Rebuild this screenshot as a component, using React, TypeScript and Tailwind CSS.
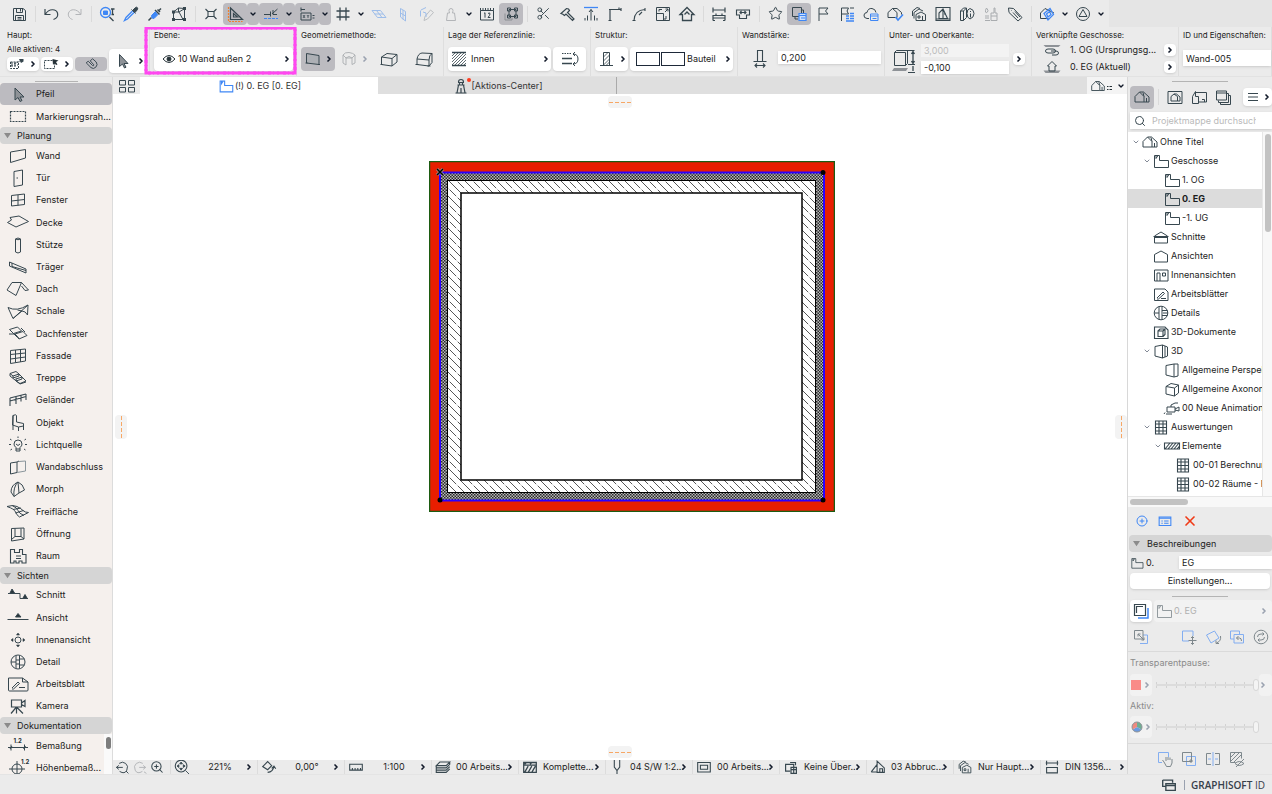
import type { ReactNode } from "react";
import {
  ChevronDown,
  ChevronRight,
  CirclePlus,
  Scissors,
  Search,
  Star,
  X,
  ZoomIn,
} from "lucide-react";

const BLUE = "#3f87f5";
const ORANGE = "#f08030";

// small icons, drawn on a 20 x 20 grid
const glyphs: Record<string, ReactNode> = {
  save: <path d="M4.500 4.500h9.500l2.500 2v10h-12zM7.500 4.500v4h6v-4M11.500 5v2.500M6.500 16.500v-5h8v5M8.500 13.500h4M8.500 15h4" />,
  undo: <path d="M4 5v5.500h5.500M4.500 10C8 4.500 15 4.500 16.500 9c.8 3-1 5.500-4 6.500" strokeWidth="1.200" />,
  redo: <path d="M16 5v5.500h-5.500M15.500 10C12 4.500 5 4.500 3.500 9c-.8 3 1 5.500 4 6.500" stroke="#b3b5b8" />,
  find: (
    <>
      <circle cx="8.500" cy="8.500" r="5" stroke={BLUE} strokeWidth="1.300" />
      <path d="M6.500 7h4v3.500h-4z" fill={BLUE} stroke={BLUE} />
      <path d="M12.500 13l4 4M14 5h3.500M15.500 5v6M14.500 10.500h2.500" strokeWidth="1.300" />
    </>
  ),
  dropper: (
    <>
      <path d="M12 6l2.500-2.500q1.500-.8 2 .3t-.2 2L14 8.500zM10.500 5.500l4 4" fill="#37474f" />
      <path d="M11.500 7L5 13.500l-1.500 3 3-1.500L13 8.500" stroke={BLUE} strokeWidth="1.300" />
    </>
  ),
  syringe: (
    <>
      <path d="M12.500 5.500l2.500 2.500M14 6.500l2-2M10 6l4.500 4.500M3.500 16.500l3-3" strokeWidth="1.500" />
      <path d="M10.500 7.500l-4 4 .5 2.500 2 .5 4-4" stroke={BLUE} fill={BLUE} />
    </>
  ),
  frameEdit: (
    <>
      <path d="M4.500 8l5-4 6 .5v11h-11zM9.500 4v4M5 8h5l4 7.500M10 8l5-3" />
      <path d="M3 6.500h3v3H3zM14 3h3v3h-3zM14 14h3v3h-3zM3 14h3v3H3z" fill="#37474f" stroke="none" />
    </>
  ),
  nodeX: <path d="M7 7.500h6v5H7zM7 7.500L4.500 5M13 7.500L15.500 5M7 12.500L4.500 15M13 12.500l2.500 2.500" strokeWidth="1.100" />,
  setSquare: (
    <>
      <path d="M5.500 4v11.500h12zM8.500 9.500v3.500h4z" strokeWidth="1.200" />
      <path d="M3.500 3v14.500h14" stroke={ORANGE} strokeWidth="1.200" strokeDasharray="2 1" />
    </>
  ),
  snap: (
    <>
      <path d="M3 10.500h6.500M9.500 7.500v5M11 10l5.500-5M12 6v4.500h4" />
      <path d="M3 14.500h14" stroke={BLUE} strokeDasharray="3 1" />
    </>
  ),
  coords: (
    <>
      <path d="M4 5.500h4M4 3.500v4M4 9h10v7H4zM15.500 11.500h2M15.500 14h2" />
      <path d="M6 11l2 3m0-3l-2 3M10 11l1 1.500 1-1.500M11 12.500V14" strokeWidth=".8" />
    </>
  ),
  hash: <path d="M7 3.500v13M13 3.500v13M3.500 7h13M3.500 13h13" strokeWidth="1.300" />,
  planeFlat: <path d="M3 6.500h8.500l5.500 7H8.500zM5.500 10h8.500M7.500 6.500l5.500 7" stroke="#9dbdea" />,
  planeTall: <path d="M7.500 4.500l5 3v9.500l-5-4zM10 6v9.500M7.500 9l5 3" stroke="#9dbdea" />,
  pencilPlane: (
    <>
      <path d="M4 6l5-2.500M3.500 6.500v6" stroke="#9dbdea" />
      <path d="M13.500 6l3 2.500-6 6.500-3.500 1.500 1-4z" stroke="#bcbfc2" />
      <path d="M6 8l3 1v4" stroke="#9dbdea" />
    </>
  ),
  weight: <path d="M8 6.500a2 2 0 1 1 4 0c0 1-.5 1.500-.5 2.500h2l1 7.500h-9l1-7.500h2c0-1-.5-1.500-.5-2.500z" stroke="#b3b5b8" />,
  ruler12: (
    <>
      <path d="M3.500 6.500v9.500h13V6.500M3.500 6.500V4M6 6V4M8.500 6V4M11 6V4M13.500 6V4M16.500 6.500V4M3.500 6.500h13" />
      <path d="M7 9.500l1-.8v5M11 9.500q2-1.500 2 .5 0 1-2 3.500h2.500" />
    </>
  ),
  boxNodes: (
    <>
      <path d="M4 9.500v6.500h7v-2.500" stroke="#8c9094" />
      <path d="M8 5.500h7v7H8zM6.500 4h3v3h-3zM13.500 4h3v3h-3zM6.500 11h3v3h-3zM13.500 11h3v3h-3z" />
    </>
  ),
  axe: <path d="M4 9.500l5.500-5q2.500 0 3 2l-2 2L17 15l-1.500 1.500-6.500-6.500-1.500 1.500q-1.500-1.500-3.500-2z" strokeWidth="1.200" />,
  raise: (
    <>
      <path d="M3 3.500h14" stroke={BLUE} strokeWidth="1.300" />
      <path d="M10 16.500v-11M8 8l2-2.500L12 8M6.500 16.500v-5M13.500 16.500v-5M4 16.500v-2.500M16 16.500v-2.500" />
    </>
  ),
  cornerL: <path d="M5 16.500v-11h11M3.500 16.500h3M16 4v3M14 3.500v2M4 5.500h2" strokeWidth="1.200" />,
  cornerArc: <path d="M5 16.500Q5.500 6 16 5.500M3.500 16.500h3M16 4v3M10 11l3-3" strokeWidth="1.100" />,
  resize: <path d="M3.500 3.500h13v13h-13zM3.500 9.500h7v7M12 8l3-3M12.500 5H15v2.500M13 12v3h-2M6 5.500h3M6 5.500v2" />,
  houseUp: <path d="M3 10.500l7-7 7 7h-2.500v6h-9v-6zM7.500 10.500L10 8l2.500 2.500" strokeWidth="1.300" />,
  dimH: <path d="M4 3.500v5M16 3.500v5M4 6h12M4 16.500v-5h12v5M4 14h12M7 9.500v2M13 9.500v2M4 16.500h2M14 16.500h2" strokeWidth="1.200" />,
  beam: <path d="M3.500 6h13v5h-3v3.500h-7V11h-3zM7 8.500h6M8.500 7L7 8.500 8.500 10M11.500 7L13 8.500 11.500 10" strokeWidth="1.100" />,
  layersBlue: (
    <>
      <path d="M3.500 3.500h9v9h-9zM12.500 6h2v3M6 12.500V15h3" />
      <path d="M10 9.500h7v7h-7zM10 11.500h7M12 14h4" stroke={BLUE} fill="#cfe0fa" strokeWidth="1.200" />
    </>
  ),
  flag: <path d="M6 17V4h9l-2.500 3 2.500 3H6" />,
  flagList: (
    <>
      <path d="M4.500 17V4h7l-1.500 3 1.500 3h-7M13 4h4" />
      <path d="M9 12h3M13 12h4M9 14.500h3M13 14.500h4M13 9.500h4M9 17h8" stroke={BLUE} strokeWidth="1.400" />
    </>
  ),
  cloudList: (
    <>
      <path d="M8 14.500H6Q2.500 14 3 11q.5-2.500 3-2.500Q7 4 11 4.500q3.500.5 4 4" />
      <path d="M9.500 10h7.500v6.500H9.500zM9.500 12h7.500M11.500 14.500h4" stroke={BLUE} />
    </>
  ),
  houseCheck: (
    <>
      <path d="M3 13.500V8.500l4.500-4 4.500 4v5zM7.500 4.500H12l4.500 4v2" />
      <path d="M10.500 13l2.500 3 5-5.500" stroke={BLUE} strokeWidth="1.600" />
    </>
  ),
  houses: <path d="M7 16.500v-6L12 8l4.500 2.500v6zM5 14.500V8.500L10 5l4 2M3.500 12V7L8 3.500l3 1M9 12h2v2H9zM13.500 12v4" />,
  houseFrame: <path d="M3 3.500h14v13H3zM3 15h14M6 14.500V9l4-4 4.500 9.500zM10 5v9.500M11 10h2" strokeWidth="1.100" />,
  info3d: <path d="M3.500 7l3-3h3v9.500l-3 3h-3zM6.500 7V16.500M3.500 7h3l3-3M13 4.500q4 1 4 5t-4 5.500q-3-1-3-5.500t3-5zM13.500 7v1M13.500 9.500v4" />,
  brush: <path d="M5.500 4Q4 6.500 4.500 8t2 0T5.500 4zM13 4v5h-3v3h6V9h-2V4zM10 12v4.500h6V12M4 12h4M4 14h4M4 16.500h5" stroke="#a9acaf" />,
  tag: <path d="M3.500 4l5 .5 8.500 9-4 3.500L4 8.500zM6 6.500h.5M8 8.500l5 5.500M10 7.500l5 5.500" />,
  cubeBlue: (
    <>
      <path d="M3.500 14.500V9L8 4.500 17 9M3.500 14.500h8" />
      <path d="M7 9.500l6-5 3.500 6-5.500 5.500zM9.500 10l3-2.500 1.500 3-3 2.500z" stroke={BLUE} strokeWidth="1.300" />
    </>
  ),
  triCircle: (
    <>
      <circle cx="10" cy="10" r="6.500" />
      <path d="M10 5.500l4 7H6z" />
    </>
  ),
  selNodes: (
    <>
      <path d="M3.500 8v6.500h8V8zM7 10l8-4M4 11h7M5 8v6M8 8v6" strokeDasharray="2 1" />
      <path d="M12 5h4.500v2.500L14 9z" fill="#37474f" stroke="none" />
    </>
  ),
  selBox: (
    <>
      <path d="M3.500 6.500h10v8h-10z" strokeDasharray="2 1" />
      <path d="M11.500 5l6 1.500-2.500 1.500 1.500 2.500-1.500.5-1.500-2L12 11z" fill="#263238" stroke="none" />
    </>
  ),
  magnet: <path d="M4 8.500L10 14.500Q13 17 16 14t.5-6.500L12 3.500M4 8.500l2.500-2 5.500 5.500q1.500.8 1.500-1L9 6M9 6l3-2.500" strokeWidth="1.200" />,
  arrow: <path d="M6.500 3.500v12l3-2.500 2 4 1.500-.8-2-3.700h4z" fill="#8e9297" stroke="#37474f" />,
  wallGeo: <path d="M3.500 4.500L16 6.500v9L3.500 14zM2.500 14h2M15 15.500h2" fill="#adb0b5" />,
  wallArc: (
    <g stroke="#b0b3b6">
      <path d="M4 6q2-3 6-2.500t6 2.500v8l-3 1.500V9H7v7l-3-2zM7 9q3-3 6 0M4 6l3 3M16 6l-3 3" />
    </g>
  ),
  wallBox: <path d="M2.500 8l10.500 1.500v7.500L2.500 15.500zM2.500 8l5.500-3.500 10 1v7.500L13 17M13 9.500l5-4M1.500 15.500h2" />,
  wallSlant: <path d="M3 15.500V10q1-5.500 5-6l10 .5v9L15 17 3 15.500M3 10l12 1v6M15 11q0-5 3-6.500M1.500 15.500h3M13.500 17h3" />,
  hatch: (
    <>
      <path d="M3 3.500h14M3 16.500h14" strokeWidth="1.300" />
      <path d="M3 7l3-3M3 10l6-6M3 13l9-9M3 16L15 4M6 16L17 5M9 16l8-8M12 16l5-5M15 16l2-2" strokeWidth=".8" />
    </>
  ),
  flipLine: (
    <>
      <path d="M2 4.500h10" strokeDasharray="1.500 1" />
      <path d="M2 9.500h10M2 14.500h10" strokeWidth="1.600" />
      <path d="M13 5q5 0 5 5t-5 5M15 3l-2 2 2 2M15 13l-2 2 2 2" />
    </>
  ),
  wallCut: (
    <>
      <path d="M7.500 3.500h6v13h-6zM4 16.500h13" />
      <path d="M7.500 8l4-4M7.500 12l6-6M7.500 16l6-6M10 16.500l3.500-3.500" strokeWidth=".8" />
    </>
  ),
  thickness: <path d="M7.500 12V1.500h5V12M3.500 12.500h13M5 16.500h10M7 14.500l-2 2 2 2M13 14.500l2 2-2 2" strokeWidth="1.100" />,
  linkTop: (
    <>
      <path d="M1.500 5h17l-2 2h-13z" fill="#8e9297" stroke="none" />
      <path d="M6 9h5q2.500 0 2.500 2T11 13H6q-2.500 0-2.500-2T6 9zM9 11h5q2.500 0 2.500 2T14 15h-4" />
    </>
  ),
  linkHome: (
    <>
      <path d="M1.500 13.500h17l-2 2.500h-13z" fill="#8e9297" stroke="none" />
      <path d="M5.500 9L10 4.500 14.500 9H13v5H7V9z" />
    </>
  ),
  grid4: <path d="M2.500 4.500h6v4.500h-6zM11.500 4.500h6v4.500h-6zM2.500 11.500h6v4.500h-6zM11.500 11.500h6v4.500h-6z" />,
  storey: <path d="M3.500 4.500h5v5h9v7h-14zM5 4.500v3l2-3" />,
  tower: <path d="M7 6.500h6M7.500 6q0-2.500 2.500-2.500T12.500 6M6.500 9h7M7.500 9l-1.500 8h8l-1.500-8zM8.500 6.500V9M11.500 6.500V9M10 12v5M4.500 17h11" strokeWidth="1.200" />,
  home3d: <path d="M3 15V9.500L7.500 5l4.500 4.500V15zM7.500 5h4L17 10v5h-5M12 9.500l-1-4M14.500 15v-4" />,
  layout: <path d="M3 4.500h14v12H3zM6 14V9.500L9 7l3.500 2.500V14zM9 7h2.500L15 10v4h-2.500" />,
  sheets: <path d="M6.500 5.500h11v9.500h-8M6.500 4.500l-3 5v7h6v-7H6.500M6.500 4.500v5M13 12.500h2.500v2.500" />,
  book: <path d="M3.500 4h10v9h-10zM5.500 13.500v2h10V6.500h-2M7.500 15.500v2h10V8.500h-2M3.500 6h10" />,
  house: <path d="M3.500 8.500L10 5l6.500 3.500v7.500h-13z" />,
  cut: <path d="M3.500 9L10 5l6.500 4v7h-13zM2.500 9.500h15M3 10.500h14" />,
  interior: <path d="M3.500 5h13.500v11H3.500zM6 16V8h3v8M11.500 8h3v3h-3z" />,
  worksheet: <path d="M3.500 5h10.500l3 3v8.500H3.500zM6 14l6-6 1.500 1.500L7.500 15H6M10 14.500h5" />,
  detail: (
    <>
      <circle cx="10" cy="10" r="6.800" />
      <path d="M8 3.500v13M11 3.500v13M3.500 10h4.500M11 7.500h5.500M11 12.500h5.500M12 10h5" />
    </>
  ),
  doc3d: <path d="M3.500 5h10.500l3 3v8.500H3.500zM7 9h5v5.500H7zM7 9l2-2h5v5.500l-2 2M12 9l2-2" strokeWidth="1.100" />,
  view3d: <path d="M4 5.500L11.500 4v13L4 15zM11.500 4l5 2v9l-5 2M14 5v11" />,
  persp: <path d="M4 5.500L12 4v13L4 15zM12 4h4v12l-4 1" />,
  axo: <path d="M4 7.500l8.500 1.500v8L4 15zM4 7.500l5-3 7.500 1.500v8l-4 3M12.500 9l4-3" />,
  anim: <path d="M5 9h8v5H5zM13 11l4-2v4l-4-1M9 9V7l4-2h3M4 16h6M3 14.500L2 16" />,
  table: <path d="M4.500 4h11v13h-11zM4.500 7h11M4.500 10.500h11M4.500 14h11M8 4v13M12 4v13" strokeWidth="1.100" />,
  hatchBar: <path d="M2.500 7h15v6h-15zM3 13l5-6M6 13l5-6M9 13l5-6M12 13l5-6M15 13l2.500-3" strokeWidth="1.100" />,
  listBlue: <path d="M3.500 5.500h13v9.500h-13zM3.500 7h13M6 10h1.500M9 10h5M6 12.500h1.500M9 12.500h5" stroke={BLUE} strokeWidth="1.200" />,
  traceOn: (
    <>
      <path d="M7 17h10V7" stroke={BLUE} strokeWidth="1.500" />
      <path d="M3.500 3.500h11v11h-11zM5.500 12V5.500H12" strokeWidth="1.200" />
    </>
  ),
  swap: (
    <>
      <path d="M9 16.500h7.500V8H12" stroke={BLUE} />
      <path d="M3.500 3.500H12V12H3.500zM7 7l6 6M7 9.500V7h2.500M13 10.500V13h-2.500" />
    </>
  ),
  moveRef: (
    <>
      <path d="M10 14H3.500V4H14v5" stroke={BLUE} />
      <path d="M13.500 9.500v8M9.500 13.500h8M12 11l1.500-1.500L15 11M12 16l1.500 1.500L15 16" />
    </>
  ),
  rotateRef: (
    <>
      <path d="M3.500 8l8-4 4.500 7-8 5z" stroke={BLUE} />
      <path d="M17.500 9q1 5-4 7M13 13.500v3h3" />
    </>
  ),
  resetRef: (
    <>
      <path d="M3.500 4h9v3M3.500 4v8H7M7 7.500h9.500v8.500H7z" stroke={BLUE} />
      <path d="M9.500 11h3q2 0 2 3M9.500 11l2-2M9.500 11l2 2" />
    </>
  ),
  refresh: (
    <>
      <circle cx="10" cy="10" r="6.800" />
      <path d="M6.500 10q0-3 3.500-3h3M11.500 5.500L13 7l-1.500 1.500M13.500 10q0 3-3.500 3H7M8.500 11.500L7 13l1.500 1.500" />
    </>
  ),
  handRef: (
    <>
      <path d="M7 13.500H3.500v-10h10V8" stroke={BLUE} />
      <path d="M9 13l-1.500-2M9 13l2.500 4.500h4L17 14v-4M11 12V8M13 11V8M15 11V8.500" />
    </>
  ),
  splitRef: (
    <>
      <path d="M7.500 7.500h9v9h-9z" stroke={BLUE} />
      <path d="M3.500 3.500h9v9h-9zM10 12h4M12 10v4" />
    </>
  ),
  mirrorRef: (
    <>
      <path d="M8 4.500H3.500v11H8M12 4.500h4.500v11H12" />
      <path d="M10 3v14M5 10h3M15 10h-3" stroke={BLUE} />
    </>
  ),
  hideRef: <path d="M3.500 3.500h11v6M3.500 3.500v10h5M4 8l4-4M4 12l8-8M7 13l7-7M8 14.500q4-4 9 0-5 4-9 0M9 18l8-8" />,
  zoomBack: <path d="M6.500 5.500q4-3 8 0t1.500 8.500-9 1.500M3 10.500h8M3 10.500L6 8M3 10.500L6 13M15 15l3 3" strokeWidth="1.200" />,
  zoomNext: <path d="M13.500 5.500q-4-3-8 0T4 14t9 1.500M17 10.500H9M17 10.500L14 8M17 10.500L14 13M15 16l3 2" stroke="#b3b5b8" strokeWidth="1.200" />,
  zoomFit: (
    <>
      <circle cx="9" cy="9" r="6.500" strokeWidth="1.200" />
      <path d="M14 14l4 4M9 4.500L7.500 6.500h3zM9 13.500l-1.500-2h3zM4.500 9l2-1.500v3zM13.500 9l-2-1.500v3z" fill="#37474f" />
    </>
  ),
  orient: <path d="M3 9.500L8.500 4l4.500 4.500L8.500 13zM8.500 16q6-.5 7-7M13 11.500L15.500 9l2 3" strokeWidth="1.200" />,
  scaleBar: <path d="M3 7h14v6.500H3zM6 11v2M9 11v2M12 11v2M15 11v2" strokeWidth="1.200" />,
  stack: <path d="M6.500 4.500h11l-4 4h-11zM2.500 8.500v2.500h11l4-4V4.500M2.500 11v2.500h11l4-4M2.500 13.500V16h11l4-4" strokeWidth="1.200" />,
  structure: <path d="M3 5h14v11H3zM3 8h14M4 16l4-7M8 16l4-7M12 16l4-7M4 7l2-2M10 7l2-2" strokeWidth="1.400" />,
  pen: <path d="M7 2v8l3 4 3-4V2M10 14v4" strokeWidth="1.200" />,
  frame: <path d="M3 5h14v10.500H3zM6 8h8v4.500H6z" strokeWidth="1.200" />,
  override: <path d="M9 14.500H4V7h9v3M10 10.500h6v6.500h-6zM10 13h6M13 10.500v6M9 5h6v3" strokeWidth="1.300" />,
  phase: <path d="M2.500 15.500l7-9M9 3.500v12.500h8v-5zM12 16v-4h3v4M2.500 15.500H9" strokeWidth="1.200" />,
  dinDim: <path d="M4 3v5M16 3v5M3 5.500h14M4 10.500h12v6H4z" strokeWidth="1.200" />,
  desk: <path d="M3 4.500h11v3M3 4.500v7h3M6.500 8.500H17v7.500H6.500zM6.500 10.500H17" strokeWidth="1.500" />,
};

// tool box icons, drawn on a 24 x 20 grid
const tools: Record<string, ReactNode> = {
  Pfeil: <path d="M9 4v12l3-2.500 2 4 2-1-2-3.500h4z" fill="#8e9297" />,
  "Markierungsrah...": <path d="M4.500 5.500h15v10h-15z" strokeDasharray="2 1" strokeWidth="1.200" />,
  Wand: <path d="M4.500 6l15-2.500V12l-15 4.500z" />,
  Tür: <path d="M8 3.500L16.500 2v15L8 18.500zM10.500 10H12" />,
  Fenster: <path d="M5.500 5.500L18.500 4v10.500L5.500 16zM12 5v10.500M5.500 11l13-1.500" />,
  Decke: <path d="M1.500 10.500L5.500 8 4 5.500l9-1.500 9.500 5.500L10 15z" />,
  Stütze: <path d="M9.500 4v13q2.500 2 5 0V4q-2.500-2-5 0 2.500 1.500 5 0" />,
  Träger: <path d="M3.500 5L20 12v4L3.500 9zM6 6v3.500M6 9.500l14 4" />,
  Dach: <path d="M1 11l5-7.500h9.500L22.500 11l-3.500.5L15.500 7M15.500 3.500L10 16.500 1 11" />,
  Schale: <path d="M2 6.500Q11 11 22 4l-.5 10q-2-4-5.500-4L7 17.500zM11.500 9l4.500 1M7 17.500L22 4" />,
  Dachfenster: <path d="M3.500 6.500l8-2.500 4 4-8 2.500zM9 11l8-2.500 4 4L13 16zM3 11h6l4 4.500M15 5l4 4M7 10l4 4" />,
  Fassade: <path d="M4.500 4.500l15-1.500v12l-15 2.500zM9.500 4v12.500M14.500 3.500V16M4.500 8.500l15-1.500M4.500 13l15-2" />,
  Treppe: <path d="M4 5.500l6-2 3 2.500-6 2zM7 8v2l6-2V6l3 3-6 2M10 10.500v2.500l6-2V9l4 4-6 2.500-4-2.500M4 5.500V8l10 8 6-2" />,
  Geländer: <path d="M4 8l16-4M4 8v8M10 6.500v7.500M15 5.500v6M20 4v6M4 11l16-4.500" strokeWidth="1.100" />,
  Objekt: <path d="M7 3.500q3-1.500 3.500 0V10l7 1.500V14l-5 1-6-2zM7 3.500V13M7 13v5M12.500 15v4M17.500 14v4" />,
  Lichtquelle: <path d="M8 9a4 4 0 1 1 8 0q0 2-2 3.500v3.500h-4v-3.500Q8 11 8 9zM10 14h4M10 9l2 1.500L14 9M5.500 5L4 4M18.500 5L20 4M5 9.500H3M21 9.500h-2M6 14l-1.500 1M18 14l1.500 1M12 3V1.500" />,
  Wandabschluss: (
    <>
      <path d="M4.500 6L11 5v10.500L4.500 17zM11 5l2-1" />
      <path d="M13 4.500l6.500-.5v10L11 15.500" stroke="#8b969c" />
    </>
  ),
  Morph: <path d="M5 13q0-7 7-10l1 11-5 3.500zM12 3q5 2 6.500 8L13 14M8 17.500Q7 8 12 3" />,
  Freifläche: <path d="M1 5.500q6-2 10 0t6 4q2 2 5.500 2l-9 4.500q-3-2-4-5T1 5.500M7 8.500l8-1.500M9.500 12l8-2.500M6 4.500q5 2 6 5t6 5" />,
  Öffnung: <path d="M5.500 4.500L18 4v11L5.500 17zM9 4.500v8l-3.500 3M9 12.500h6V4.500M15 12.500L18 15" />,
  Raum: <path d="M4.500 3.500h4v3h5v-3h3v5h3.500v8.500h-4v-2h-3v2h-3v-2h-2v2h-3.500zM10 10h5M10 12.500h5" strokeWidth="1.100" />,
  Schnitt: (
    <>
      <path d="M2 8.500h12v5h8" />
      <path d="M4 8l2-4 2.500 4zM17 13l2-3.500 2 3.500z" fill="#263238" />
    </>
  ),
  Ansicht: (
    <>
      <path d="M1.500 12.500h21" />
      <path d="M9.500 10l2.500-3.500 3 3.500z" fill="#263238" />
    </>
  ),
  Innenansicht: (
    <>
      <circle cx="12" cy="10" r="3" />
      <path d="M12 3l-1.500 2h3zM12 17l-1.500-2h3zM5 10l2-1.500v3zM19 10l-2-1.500v3z" fill="#263238" strokeWidth=".6" />
    </>
  ),
  Detail: (
    <>
      <circle cx="12" cy="10" r="7" />
      <path d="M10 3.500v13M13.500 3.500v13M5 10h5M13.500 7h5M13.500 13h5M10 8h4M10 12h4" />
    </>
  ),
  Arbeitsblatt: <path d="M2.500 4h14l5.500 4v8q0 1-1 1H3.500q-1 0-1-1zM6 14l6-6 1.500 1.500-6 5.500H6M13 13.500h6M16.500 4v4H22" />,
  Kamera: <path d="M5.500 4h10v7h-10zM15.500 7L19 4.500v6L15.500 8.500M10.500 11v6.500M10.500 11L5 17.500M10.500 11l6.500 6.500" strokeWidth="1.200" />,
  Bemaßung: (
    <>
      <path d="M2 12.500h20M5 9.500v6M18.500 9.500v6M4 14l2-3M17.500 14l2-3" />
      <text x="7.500" y="8" fontSize="6" fontWeight="700" fill="#263238" stroke="none">1.2</text>
    </>
  ),
  "Höhenbemaß...": (
    <>
      <circle cx="11" cy="11" r="5" />
      <path d="M3 11h16M11 3v15" />
      <text x="15" y="6" fontSize="6" fontWeight="700" fill="#263238" stroke="none">1.2</text>
    </>
  ),
};

const toolGroups = [
  { title: "", items: ["Pfeil", "Markierungsrah..."] },
  {
    title: "Planung",
    items: [
      "Wand", "Tür", "Fenster", "Decke", "Stütze", "Träger", "Dach", "Schale", "Dachfenster", "Fassade",
      "Treppe", "Geländer", "Objekt", "Lichtquelle", "Wandabschluss", "Morph", "Freifläche", "Öffnung", "Raum",
    ],
  },
  { title: "Sichten", items: ["Schnitt", "Ansicht", "Innenansicht", "Detail", "Arbeitsblatt", "Kamera"] },
  { title: "Dokumentation", items: ["Bemaßung", "Höhenbemaß..."] },
];

// "|" is a divider, "v" a small menu arrow, "*" marks an active button
const toolbar = [
  "save", "|", "undo", "redo", "|", "find", "dropper", "syringe", "frameEdit", "|", "nodeX", "*setSquare", "*v",
  "*snap", "*v", "*coords", "*v", "hash", "v", "planeFlat", "planeTall", "pencilPlane", "weight", "v", "ruler12",
  "*boxNodes", "|", "scissors", "axe", "raise", "cornerL", "cornerArc", "resize", "houseUp", "|", "dimH", "beam",
  "|", "star", "*layersBlue", "flag", "flagList", "cloudList", "houseCheck", "houses", "houseFrame", "info3d",
  "brush", "tag", "|", "cubeBlue", "v", "triCircle", "v",
];

const tree = [
  { level: 0, icon: "home3d", label: "Ohne Titel", open: true },
  { level: 1, icon: "storey", label: "Geschosse", open: true },
  { level: 2, icon: "storey", label: "1. OG" },
  { level: 2, icon: "storey", label: "0. EG", selected: true },
  { level: 2, icon: "storey", label: "-1. UG" },
  { level: 1, icon: "cut", label: "Schnitte" },
  { level: 1, icon: "house", label: "Ansichten" },
  { level: 1, icon: "interior", label: "Innenansichten" },
  { level: 1, icon: "worksheet", label: "Arbeitsblätter" },
  { level: 1, icon: "detail", label: "Details" },
  { level: 1, icon: "doc3d", label: "3D-Dokumente" },
  { level: 1, icon: "view3d", label: "3D", open: true },
  { level: 2, icon: "persp", label: "Allgemeine Perspek" },
  { level: 2, icon: "axo", label: "Allgemeine Axonom" },
  { level: 2, icon: "anim", label: "00 Neue Animation" },
  { level: 1, icon: "table", label: "Auswertungen", open: true },
  { level: 2, icon: "hatchBar", label: "Elemente", open: true },
  { level: 3, icon: "table", label: "00-01 Berechnun" },
  { level: 3, icon: "table", label: "00-02 Räume - F" },
];

const indents = ["pl-1", "pl-[15px]", "pl-[26px]", "pl-[37px]"];

const statusCells = [
  { icon: "zoomFit", label: "221%", center: true },
  { icon: "orient", label: "0,00°", center: true },
  { icon: "scaleBar", label: "1:100", center: true },
  { icon: "stack", label: "00 Arbeits..." },
  { icon: "structure", label: "Komplette..." },
  { icon: "pen", label: "04 S/W 1:2..." },
  { icon: "frame", label: "00 Arbeits..." },
  { icon: "override", label: "Keine Über..." },
  { icon: "phase", label: "03 Abbruc..." },
  { icon: "houses", label: "Nur Haupt..." },
  { icon: "dinDim", label: "DIN 1356..." },
];

function Icon({ name, className = "w-5 h-5" }: { name: string; className?: string }) {
  return (
    <svg viewBox="0 0 20 20" className={`shrink-0 ${className}`} fill="none" stroke="#37474f" aria-hidden="true">
      {glyphs[name]}
    </svg>
  );
}

function More({ faded }: { faded?: boolean }) {
  return <ChevronRight className={`w-2 h-2 shrink-0 ${faded ? "text-gray-400" : "text-gray-900"}`} strokeWidth={5} />;
}

function ToolbarItem({ item }: { item: string }) {
  if (item === "|") return <span className="w-2 shrink-0 flex justify-center"><span className="w-px h-4 bg-[#dadada]" /></span>;

  const active = item.startsWith("*");
  const name = active ? item.slice(1) : item;
  const bg = active ? "bg-[#bcbbc0] rounded" : "";

  if (name === "v") {
    return (
      <button aria-label="Menü" className={`w-3 h-[22px] shrink-0 flex items-center justify-center ${bg}`}>
        <ChevronDown className="w-2 h-2 text-gray-900" strokeWidth={4} />
      </button>
    );
  }
  return (
    <button aria-label={name} className={`w-6 h-[22px] shrink-0 flex items-center justify-center ${bg}`}>
      {name === "scissors" ? (
        <Scissors className="w-[15px] h-[15px] text-[#37474f]" strokeWidth={1.5} />
      ) : name === "star" ? (
        <Star className="w-[15px] h-[15px] text-[#37474f]" strokeWidth={1.6} />
      ) : (
        <Icon name={name} />
      )}
    </button>
  );
}

function InfoSection({ title, children, width = "w-[147px] pl-1" }: { title: string; children: ReactNode; width?: string }) {
  return (
    <section className={`relative shrink-0 flex flex-col pt-[2px] border-r border-[#dedede] ${width}`}>
      <h2 className="text-[8px] leading-3 whitespace-nowrap">{title}</h2>
      {children}
    </section>
  );
}

const box = "bg-white rounded shadow-sm flex items-center";

function InfoBar() {
  return (
    <div className="h-[50px] shrink-0 flex overflow-hidden border-b border-[#e2e2e2]">
      <InfoSection title="Haupt:" width="w-[150px] pl-[7px]">
        <p className="text-[8px] leading-4">Alle aktiven: 4</p>
        <div className="flex gap-[2px] -mt-2 items-end">
          <button aria-label="Auswahl" className={`${box} w-8 h-[14px] mb-0.5 justify-between pr-0.5`}><Icon name="selNodes" className="w-5 h-5" /><More /></button>
          <button aria-label="Rahmen" className={`${box} w-8 h-[14px] mb-0.5 justify-between pr-0.5`}><Icon name="selBox" className="w-5 h-5" /><More /></button>
          <button aria-label="Magnet" className="w-8 h-[14px] mb-0.5 rounded bg-[#bcbbc0] flex items-center justify-center"><Icon name="magnet" className="w-4 h-4" /></button>
          <button aria-label="Pfeil" className={`${box} w-[38px] h-6 justify-between pl-1 pr-0.5`}><Icon name="arrow" className="w-5 h-5" /><More /></button>
        </div>
      </InfoSection>

      <InfoSection title="Ebene:">
        <button className={`${box} mt-[6px] h-6 w-[139px] pl-2 pr-0.5 gap-0.5`}>
          <svg viewBox="0 0 14 10" className="w-[14px] h-[10px] shrink-0" fill="none" stroke="#263238" aria-hidden="true">
            <path d="M1 5q6-7 12 0-6 7-12 0z" />
            <circle cx="7" cy="5" r="2" fill="#263238" />
          </svg>
          <span className="text-[9px] flex-1 text-left">10 Wand außen 2</span>
          <More />
        </button>
        {/* hand-drawn marker frame */}
        <svg className="absolute -left-[6px] -top-px w-[153px] h-[49px] pointer-events-none" fill="none" stroke="#ff48f0">
          <rect x="2" y="2" width="149" height="45" strokeWidth="3" />
          <rect x="2" y="2" width="149" height="45" strokeWidth="4" strokeDasharray="2 3 1 2 3 4" strokeOpacity=".5" />
        </svg>
      </InfoSection>

      <InfoSection title="Geometriemethode:">
        <div className="flex mt-[6px] gap-[3px] items-center">
          <button aria-label="Gerade" className="w-[34px] h-6 rounded bg-[#bcbbc0] flex items-center justify-center gap-0.5"><Icon name="wallGeo" /><More /></button>
          <button aria-label="Gebogen" className="w-8 h-6 flex items-center justify-center gap-0.5"><Icon name="wallArc" /><More faded /></button>
          <button aria-label="Quader" className="w-8 h-6 flex items-center justify-center"><Icon name="wallBox" /></button>
          <button aria-label="Geneigt" className="w-8 h-6 flex items-center justify-center"><Icon name="wallSlant" /></button>
        </div>
      </InfoSection>

      <InfoSection title="Lage der Referenzlinie:">
        <div className="flex mt-[6px] gap-0.5">
          <button className={`${box} h-6 w-[103px] px-px gap-0.5`}>
            <Icon name="hatch" />
            <span className="text-[9px] flex-1 text-left">Innen</span>
            <More />
          </button>
          <button aria-label="Umkehren" className={`${box} h-6 w-[33px] justify-center`}><Icon name="flipLine" /></button>
        </div>
      </InfoSection>

      <InfoSection title="Struktur:">
        <div className="flex mt-[6px] gap-0.5">
          <button aria-label="Wandtyp" className={`${box} h-6 w-[33px] justify-between px-px`}><Icon name="wallCut" /><More /></button>
          <button className={`${box} h-6 w-[103px] pl-[6px] pr-px gap-px`}>
            <span className="w-6 h-[14px] border border-gray-800" />
            <span className="w-6 h-[14px] border border-gray-800" />
            <span className="text-[9px] flex-1 text-left pl-px">Bauteil</span>
            <More />
          </button>
        </div>
      </InfoSection>

      <InfoSection title="Wandstärke:">
        <div className="flex mt-[6px] gap-2 items-start">
          <Icon name="thickness" className="w-5 h-6 ml-2" />
          <input aria-label="Wandstärke" defaultValue="0,200" className="bg-white h-[13px] mt-[4px] w-[103px] px-[3px] text-[9px] shadow-sm" />
        </div>
      </InfoSection>

      <InfoSection title="Unter- und Oberkante:">
        <div className="flex mt-[3px] items-center">
          <svg viewBox="0 0 26 26" className="w-[26px] h-[26px] ml-0.5 mt-1 shrink-0" fill="none" stroke="#37474f" aria-hidden="true">
            <path d="M3.500 4.500h11v13h-11zM3.500 4.500l2-2h11v13l-2 2M15.500 2.500h8M17 16.500h7M17 24.500h7" />
            <path d="M22 4v10M20.500 6L22 3.500 23.500 6M20.500 13l1.500 2.500 1.500-2.500M22 18v5" strokeWidth="1.300" />
            <path d="M3 20h14l-2 3H1z" fill="#8e9297" stroke="none" />
          </svg>
          <div className="flex flex-col gap-1 ml-1">
            <input aria-label="Oberkante" defaultValue="3,000" disabled className="bg-[#f3f3f3] h-[13px] w-[88px] px-[3px] text-[9px] text-[#bcbcbc]" />
            <input aria-label="Unterkante" defaultValue="-0,100" className="bg-white h-[13px] w-[88px] px-[3px] text-[9px] shadow-sm" />
          </div>
          <button aria-label="Mehr" className={`${box} w-3 h-3 justify-center ml-1`}><More /></button>
        </div>
      </InfoSection>

      <InfoSection title="Verknüpfte Geschosse:">
        {[["linkTop", "1. OG (Ursprungsg..."], ["linkHome", "0. EG (Aktuell)"]].map(([icon, label]) => (
          <div key={label} className="flex items-center h-[17px] pr-[2px]">
            <Icon name={icon} className="w-5 h-5 ml-[6px] mr-2" />
            <span className="text-[9px] flex-1 whitespace-nowrap">{label}</span>
            <button aria-label={label} className={`${box} w-3 h-3 justify-center`}><More /></button>
          </div>
        ))}
      </InfoSection>

      <InfoSection title="ID und Eigenschaften:" width="flex-1 min-w-[90px] pl-1">
        <input aria-label="ID" defaultValue="Wand-005" className="bg-white h-4 w-full mt-[9px] px-[3px] text-[9px] shadow-sm" />
      </InfoSection>
    </div>
  );
}

function ToolBox() {
  return (
    <aside className="w-[113px] shrink-0 flex flex-col overflow-hidden bg-[#f5f0ed] border-r border-[#dcdcdc]">
      <div className="h-[6px] shrink-0 bg-[#ebebeb] flex justify-center items-end pb-px"><span className="w-[43px] h-px bg-[#b4b4b4]" /></div>
      <div className="relative flex-1 min-h-0">
        <div className="h-[calc(100%+5px)] flex flex-col">
          {toolGroups.map((group) => (
            <div key={group.title} className="contents">
              {group.title && (
                <button className="h-[17px] shrink-0 bg-[#d5d5d5] rounded-sm flex items-center pl-1 gap-[6px] text-[9px]">
                  <svg viewBox="0 0 8 8" className="w-[7px] h-[7px]"><path d="M0 1h8L4 7z" fill="#8b8b8b" /></svg>
                  {group.title}
                </button>
              )}
              {group.items.map((item) => (
                <button
                  key={item}
                  className={`flex-1 min-h-0 flex items-center pl-[6px] gap-[6px] text-[9px] whitespace-nowrap ${item === "Pfeil" ? "bg-[#bcbbc0] rounded" : ""}`}
                >
                  <svg viewBox="0 0 24 20" className="w-6 h-5 shrink-0" fill="none" stroke="#37474f" aria-hidden="true">{tools[item]}</svg>
                  {item}
                </button>
              ))}
            </div>
          ))}
        </div>
        <div className="absolute right-0 bottom-0 w-2 h-10 bg-[#fafafa] flex justify-center pt-[3px]"><span className="w-[5px] h-3 rounded-full bg-[#7d7d7d]" /></div>
      </div>
    </aside>
  );
}

function FloorPlan() {
  return (
    <svg viewBox="0 0 406 351" className="absolute left-[316px] top-[67px] w-[406px] h-[351px]" fill="none">
      <defs>
        <pattern id="insulation" width="3" height="3" patternUnits="userSpaceOnUse">
          <rect width="3" height="3" fill="#b9b9b9" />
          <path d="M0 0h1.500v1.500H0zM1.500 1.500H3V3H1.500z" fill="#2a2a2a" />
        </pattern>
        <pattern id="masonry" width="16" height="16" patternUnits="userSpaceOnUse">
          <rect width="16" height="16" fill="#fff" />
          <path d="M-1 -1L17 17" stroke="#444" strokeWidth=".9" />
          <path d="M7 -1L17 9M-1 7L9 17" stroke="#444" strokeWidth=".9" strokeDasharray="6 2" />
        </pattern>
      </defs>
      <rect x=".5" y=".5" width="405" height="350" fill="#e81e00" stroke="#1c5c12" strokeWidth="1.500" />
      <rect x="11" y="11.500" width="384" height="328" fill="url(#insulation)" stroke="#2a00ff" strokeWidth="2" />
      <rect x="18.500" y="19.500" width="368" height="312" fill="url(#masonry)" stroke="#000" />
      <rect x="32" y="32" width="341" height="287" fill="#fff" stroke="#000" strokeWidth="1.500" />
      <circle cx="394" cy="11.500" r="2.500" fill="#000" />
      <circle cx="394" cy="339" r="2.500" fill="#000" />
      <circle cx="11" cy="339" r="2.500" fill="#000" />
      <path d="M8 8l6 6M14 8l-6 6" stroke="#999" strokeWidth="3" />
      <path d="M8 8l6 6M14 8l-6 6" stroke="#000" strokeWidth="1.500" />
    </svg>
  );
}

function Handle({ className, vertical }: { className: string; vertical?: boolean }) {
  return (
    <div className={`absolute flex justify-center items-center ${className}`}>
      <svg viewBox={vertical ? "0 0 12 24" : "0 0 24 12"} className={`bg-[#f3f3f3] rounded-sm ${vertical ? "w-3 h-6" : "w-6 h-3"}`}>
        <path d={vertical ? "M6.500 1v22" : "M1 6.500h22"} stroke="#f7a765" strokeDasharray="4 2" />
      </svg>
    </div>
  );
}

function Workspace() {
  return (
    <main className="flex-1 min-w-0 flex flex-col">
      <div className="h-[17px] shrink-0 flex bg-[#dfdfdf] text-[9px] text-[#333]">
        <button aria-label="Übersicht" className="w-[27px] bg-[#ebebeb] flex items-center justify-center"><Icon name="grid4" className="w-5 h-5" /></button>
        <button className="w-[238px] bg-white flex items-center justify-center">
          <svg viewBox="0 0 20 20" className="w-[18px] h-[18px]" fill="none" stroke={BLUE} strokeWidth="1.200">{glyphs.storey}</svg>
          (!) 0. EG [0. EG]
        </button>
        <button className="w-[239px] flex items-center justify-center border-r border-[#aaa]">
          <span className="relative flex">
            <Icon name="tower" className="w-5 h-5" />
            <span className="absolute right-0 top-0.5 w-1 h-1 rounded-full bg-[#ff3b1f]" />
          </span>
          [Aktions-Center]
        </button>
        <button aria-label="Ansichten" className="ml-auto w-10 bg-[#f4f4f4] flex items-center justify-center">
          <Icon name="home3d" className="w-[18px] h-[18px]" />
          <svg viewBox="0 0 6 6" className="w-[6px] h-[6px] mt-1 mr-1" stroke="#263238"><path d="M0 1.500h1.500M2.500 1.500H5M0 4.500h1.500M2.500 4.500H5" /></svg>
          <ChevronDown className="w-2 h-2 text-gray-900" strokeWidth={4} />
        </button>
      </div>

      <div className="relative flex-1 min-h-0 bg-white overflow-hidden">
        <FloorPlan />
        <Handle className="top-[2px] inset-x-0" />
        <Handle className="bottom-[2px] inset-x-0" />
        <Handle className="left-[2px] inset-y-0" vertical />
        <Handle className="right-0 inset-y-0" vertical />
      </div>

      <div className="h-[14px] shrink-0 flex text-[9px] overflow-hidden">
        <div className="w-[58px] shrink-0 flex items-center pl-px border-r border-[#dcdcdc]">
          <button aria-label="Zoom zurück" className="mr-0.5"><Icon name="zoomBack" className="w-4 h-4" /></button>
          <button aria-label="Zoom vor" className="mr-0.5"><Icon name="zoomNext" className="w-4 h-4" /></button>
          <button aria-label="Vergrößern"><ZoomIn className="w-[14px] h-[14px] text-[#37474f]" strokeWidth={1.8} /></button>
        </div>
        {statusCells.map((cell, i) => (
          <button key={i} className={`flex items-center pl-[2px] whitespace-nowrap ${cell.icon === "dinDim" ? "flex-1 pr-px" : "w-[87px] shrink-0 pr-1 border-r border-[#dcdcdc]"}`}>
            <Icon name={cell.icon} className="w-[18px] h-[18px] mr-1" />
            <span className={`flex-1 min-w-0 ${cell.center ? "text-center" : "text-left"}`}>{cell.label}</span>
            <More />
          </button>
        ))}
      </div>
    </main>
  );
}

function Slider({ label }: { label: string }) {
  return (
    <div className="relative w-[107px] h-4 flex items-center">
      <div className="absolute inset-x-1 h-[6px] flex justify-between">
        {Array.from({ length: 11 }, (_, i) => <span key={i} className="w-px h-full bg-[#d2d2d2]" />)}
      </div>
      <div className="absolute inset-x-1 h-[2px] bg-[#dcdcdc]" />
      <input
        type="range"
        aria-label={label}
        defaultValue={100}
        className="relative w-full h-4 appearance-none bg-transparent [&::-webkit-slider-thumb]:appearance-none [&::-webkit-slider-thumb]:w-[6px] [&::-webkit-slider-thumb]:h-3 [&::-webkit-slider-thumb]:rounded-full [&::-webkit-slider-thumb]:bg-[#f4f4f4] [&::-webkit-slider-thumb]:border [&::-webkit-slider-thumb]:border-[#d6d6d6]"
      />
    </div>
  );
}

function Navigator() {
  return (
    <aside className="w-[145px] shrink-0 flex flex-col overflow-hidden border-l border-[#d8d8d8] text-[9px]">
      <div className="h-2 shrink-0 flex justify-center items-center"><span className="w-14 h-px bg-[#b4b4b4]" /></div>
      <div className="h-6 shrink-0 flex items-center pl-[2px] mb-[3px]">
        <button aria-label="Projektmappe" className="w-6 h-[23px] rounded bg-[#bcbbc0] flex items-center justify-center"><Icon name="home3d" /></button>
        <span className="w-px h-4 bg-[#dadada] ml-1 mr-1" />
        <button aria-label="Ausschnitte" className="w-6 flex justify-center"><Icon name="layout" /></button>
        <button aria-label="Layouts" className="w-6 flex justify-center"><Icon name="sheets" /></button>
        <button aria-label="Publisher" className="w-6 flex justify-center"><Icon name="book" /></button>
        <button aria-label="Menü" className={`${box} flex-1 h-[18px] ml-2 pl-1 gap-1`}>
          <svg viewBox="0 0 12 12" className="w-3 h-3 shrink-0" stroke="#37474f"><path d="M1 2.500h10M1 6h10M1 9.500h10" /></svg>
          <More />
        </button>
      </div>
      <label className="h-[17px] shrink-0 ml-[2px] mb-[3px] bg-white shadow-sm flex items-center pl-1 gap-[6px]">
        <Search className="w-3 h-3 shrink-0 text-[#37474f]" strokeWidth={2} />
        <input placeholder="Projektmappe durchsuch" aria-label="Projektmappe durchsuchen" className="w-[104px] placeholder:text-[#b9b9b9]" />
      </label>

      <div className="flex flex-1 min-h-0 bg-[#f8f8f8]">
        <ul className="flex-1 min-w-0 bg-white overflow-hidden">
          {tree.map((node) => (
            <li key={node.label} className={`h-[19px] flex items-center whitespace-nowrap ${indents[node.level]} ${node.selected ? "bg-[#dcdcdc] font-bold" : ""}`}>
              <span className="w-2 shrink-0">{node.open && <ChevronDown className="w-2 h-2 text-gray-500" strokeWidth={2.500} />}</span>
              <Icon name={node.icon} />
              <span>{node.label}</span>
            </li>
          ))}
        </ul>
        <div className="w-[10px] shrink-0 border-l border-[#e6e6e6] flex justify-center pt-[2px]"><span className="w-[6px] h-[98px] rounded-full bg-[#c2c2c2]" /></div>
      </div>
      <div className="h-[11px] shrink-0 bg-[#f8f8f8] border-t border-[#e6e6e6] flex items-center pl-[2px]"><span className="w-[58px] h-[6px] rounded-full bg-[#c2c2c2]" /></div>

      <div className="h-7 shrink-0 flex items-center gap-2 pl-2">
        <button aria-label="Neu"><CirclePlus className="w-3 h-3" color={BLUE} strokeWidth={2} /></button>
        <button aria-label="Einstellungen"><Icon name="listBlue" className="w-[18px] h-[18px]" /></button>
        <button aria-label="Löschen"><X className="w-4 h-4 text-[#f03a17]" strokeWidth={2.500} /></button>
      </div>
      <button className="h-[17px] shrink-0 ml-px bg-[#d5d5d5] rounded-sm flex items-center pl-1 gap-[7px]">
        <svg viewBox="0 0 8 8" className="w-[7px] h-[7px]"><path d="M0 1h8L4 7z" fill="#8b8b8b" /></svg>
        Beschreibungen
      </button>
      <label className="h-[21px] shrink-0 flex items-center pl-px gap-px">
        <Icon name="storey" className="w-4 h-4" />
        <span className="w-8">0.</span>
        <input defaultValue="EG" className="flex-1 min-w-0 h-[13px] bg-white px-[3px] shadow-sm" />
      </label>
      <button className={`${box} h-4 shrink-0 mx-[2px] justify-center`}>Einstellungen...</button>
      <div className="h-[11px] shrink-0 flex justify-center items-center pt-1"><span className="w-14 h-px bg-[#b4b4b4]" /></div>
      <div className="h-[22px] shrink-0 flex pl-[2px] gap-[2px]">
        <button aria-label="Transparentpause" className={`${box} w-[22px] justify-center`}><Icon name="traceOn" /></button>
        <button disabled className="flex-1 bg-[#f2f2f2] rounded flex items-center pr-1 text-[#b0b0b0]">
          <Icon name="storey" className="w-5 h-5 opacity-50" />
          <span className="flex-1 text-left">0. EG</span>
          <More faded />
        </button>
      </div>
      <div className="h-[30px] shrink-0 flex items-center pl-[3px] pr-px gap-1 opacity-60 border-b border-[#cfcfcf]">
        <Icon name="swap" />
        <Icon name="moveRef" className="w-5 h-5 ml-6" />
        <Icon name="rotateRef" />
        <Icon name="resetRef" />
        <Icon name="refresh" />
      </div>
      <p className="h-[22px] shrink-0 pl-[2px] pt-1 text-[#8a8a8a]">Transparentpause:</p>
      <div className="h-[22px] shrink-0 flex items-center pl-[2px]">
        <button aria-label="Farbe" className="w-[22px] h-[22px] rounded bg-[#f2f2f2] flex items-center justify-center gap-0.5"><span className="w-[10px] h-[10px] bg-[#f98b88]" /><More faded /></button>
        <Slider label="Transparentpause" />
        <button aria-label="Mehr" className="flex-1 h-[22px] rounded bg-[#f2f2f2] flex items-center"><More faded /></button>
      </div>
      <p className="h-5 shrink-0 pl-[2px] pt-[3px] text-[#8a8a8a]">Aktiv:</p>
      <div className="h-[22px] shrink-0 flex items-center pl-[2px]">
        <button aria-label="Farben" className="w-[22px] h-[22px] rounded bg-[#f2f2f2] flex items-center justify-center gap-px">
          <svg viewBox="0 0 12 12" className="w-3 h-3 shrink-0">
            <path d="M6 6V1a5 5 0 0 1 4.300 7.500z" fill="#6fae92" />
            <path d="M6 6l4.300 2.500a5 5 0 0 1-8.600 0z" fill="#6c9be0" />
            <path d="M6 6L1.700 8.500A5 5 0 0 1 6 1z" fill="#ee8a80" />
            <circle cx="6" cy="6" r="5" fill="none" stroke="#8e9297" />
          </svg>
          <More faded />
        </button>
        <Slider label="Aktiv" />
      </div>
      <div className="h-[31px] shrink-0 mt-[5px] flex items-center pl-[27px] gap-1 opacity-60 border-t border-[#cfcfcf]">
        <Icon name="handRef" />
        <Icon name="splitRef" />
        <Icon name="mirrorRef" />
        <Icon name="hideRef" />
      </div>
    </aside>
  );
}

export default function App() {
  return (
    <div className="h-screen flex flex-col overflow-hidden bg-[#ebebeb] text-[#1c1c1c] font-['Inter',sans-serif]">
      <header className="h-[27px] shrink-0 flex bg-[#e5e5e5]">
        <div className="flex items-center pl-[7px] pr-[2px] bg-[#ebebeb]">
          {toolbar.map((item, i) => <ToolbarItem key={i} item={item} />)}
        </div>
      </header>
      <InfoBar />
      <div className="flex-1 min-h-0 flex">
        <ToolBox />
        <Workspace />
        <Navigator />
      </div>
      <footer className="h-5 shrink-0 flex items-center justify-end pr-[7px] gap-[6px] border-t border-[#e4e4e4]">
        <Icon name="desk" className="w-[18px] h-[18px]" />
        <span className="w-px h-[10px] bg-gray-400" />
        <span className="font-['Open_Sans',sans-serif] text-[10px] leading-4 text-[#37404a]"><b className="font-semibold">GRAPHISOFT</b> ID</span>
      </footer>
    </div>
  );
}
